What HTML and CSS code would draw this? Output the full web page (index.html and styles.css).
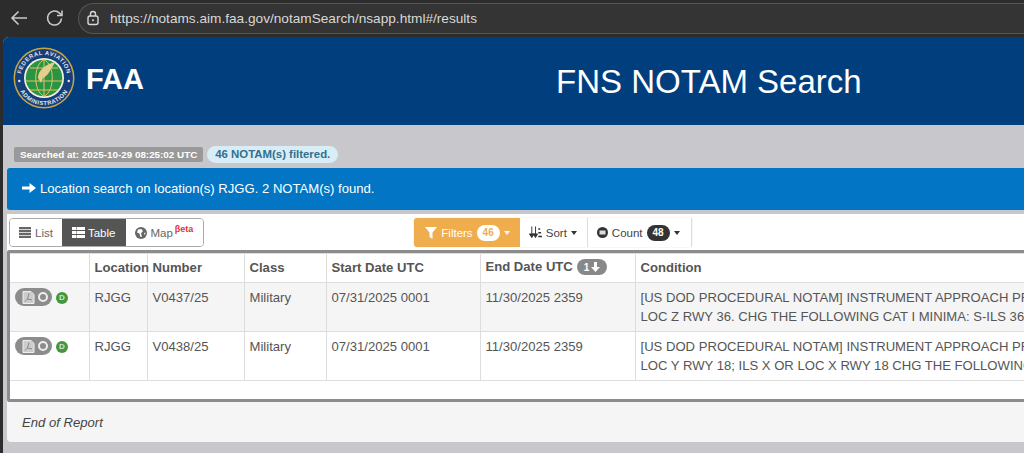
FILE: index.html
```html
<!DOCTYPE html>
<html lang="en">
<head>
<meta charset="utf-8">
<title>FNS NOTAM Search</title>
<link rel="stylesheet" href="styles.css">
</head>
<body>
<div class="browser-bar">
  <svg class="nav-icon" width="20" height="20" viewBox="0 0 20 20"><path d="M18 10H3M9.500 3.500 3 10l6.500 6.500" fill="none" stroke="#c9c9c9" stroke-width="1.6"/></svg>
  <svg class="nav-icon" width="20" height="20" viewBox="0 0 20 20"><path d="M16.500 10.500a7 7 0 1 1-2-5.400l2.200 2" fill="none" stroke="#c9c9c9" stroke-width="1.6"/><path d="M17 2.500v5h-5" fill="none" stroke="#c9c9c9" stroke-width="1.6"/></svg>
  <div class="address">
    <svg width="14" height="16" viewBox="0 0 14 16"><rect x="2" y="6" width="10" height="8.500" rx="2" fill="none" stroke="#d8d8d8" stroke-width="1.4"/><path d="M4.500 6V4a2.500 2.500 0 0 1 5 0v2" fill="none" stroke="#d8d8d8" stroke-width="1.4"/><circle cx="7" cy="10.200" r="1" fill="#d8d8d8"/></svg>
    <span class="url">https://notams.aim.faa.gov/notamSearch/nsapp.html#/results</span>
  </div>
</div>
<div class="window">
  <header class="site-header">
    <div class="brand">
      <svg class="seal" width="62" height="62" viewBox="0 0 62 62">
        <defs>
          <path id="arcTop" d="M7.800 31a23.200 23.200 0 0 1 46.400 0"/>
          <path id="arcBottom" d="M3.800 31a27.200 27.200 0 0 0 54.400 0"/>
        </defs>
        <circle cx="31" cy="31" r="30.500" fill="#c9a546"/>
        <circle cx="31" cy="31" r="29" fill="#153f7c"/>
        <circle cx="31" cy="31" r="20" fill="#f4f1e2"/>
        <circle cx="31" cy="31" r="18.300" fill="#2b9443"/>
        <path d="M12.700 34h36.600M31 12.700v36.600M17 21h28M17 43h28M31 12.700c-11 5-11 31.600 0 36.600M31 12.700c11 5 11 31.600 0 36.600" stroke="#e2c268" stroke-width="1" fill="none"/>
        <path d="M25 31c0-7 6-13 17-16-1 3-3 5-4 7-2 4-4 7-8 9l-2 5z" fill="#e6cf8c"/>
        <circle cx="6.300" cy="34" r="1.200" fill="#eee"/><circle cx="55.700" cy="34" r="1.200" fill="#eee"/>
        <text class="seal-text"><textPath href="#arcTop" startOffset="50%" text-anchor="middle">FEDERAL AVIATION</textPath></text>
        <text class="seal-text"><textPath href="#arcBottom" startOffset="50%" text-anchor="middle">ADMINISTRATION</textPath></text>
      </svg>
      <span class="faa">FAA</span>
    </div>
    <h1 class="title">FNS NOTAM Search</h1>
  </header>
  <main class="content">
    <div class="badges">
      <span class="stamp">Searched at: 2025-10-29 08:25:02 UTC</span>
      <span class="filtered">46 NOTAM(s) filtered.</span>
    </div>
    <div class="alert"><svg width="14" height="12" viewBox="0 0 14 12"><path d="M0 4.500h7.500V1L14 6l-6.500 5V7.500H0z" fill="#fff"/></svg><span>Location search on location(s) RJGG. 2 NOTAM(s) found.</span></div>
    <section class="panel">
      <div class="toolbar">
        <div class="btn-group views">
          <button class="btn list-btn"><svg width="12" height="11" viewBox="0 0 12 11"><path d="M0 0h12v2.200H0zM0 3h12v2.200H0zM0 6h12v2.200H0zM0 9h12v2H0z" fill="#666"/></svg>List</button>
          <button class="btn active"><svg width="13" height="11" viewBox="0 0 13 11"><path d="M0 0h4v3H0zM4.500 0H13v3H4.500zM0 4h4v3H0zM4.500 4H13v3H4.500zM0 8h4v3H0zM4.500 8H13v3H4.500z" fill="#fff"/></svg>Table</button>
          <button class="btn map-btn"><svg width="12" height="12" viewBox="0 0 12 12"><circle cx="6" cy="6" r="6" fill="#666"/><path d="M3 2.500 6.500 2 8 4 6 6.500 7 10 5 9.500 4.500 6.500 2 5.500zM9 6l1.500-.5L10 8.500z" fill="#fff"/></svg>Map<sup class="beta">βeta</sup></button>
        </div>
        <div class="btn-group actions">
          <button class="btn filter"><svg width="12" height="12" viewBox="0 0 12 12"><path d="M0 0h12L7.500 5.500V12l-3-2V5.500z" fill="#fff"/></svg>Filters<span class="pill light">46</span><i class="caret"></i></button>
          <button class="btn"><svg width="13" height="13" viewBox="0 0 14 13"><path d="M3 0v9M0.500 8 3 12 5.500 8zM7 0v9M4.800 8 7 12 9.200 8z" fill="#333" stroke="#333"/><path d="M10 2h2v1.500h-2zM10 6h3v1.500h-3zM10 10h4v1.500h-4z" fill="#333"/></svg>Sort<i class="caret dark"></i></button>
          <button class="btn count-btn"><svg width="11" height="11" viewBox="0 0 11 11"><circle cx="5.500" cy="5.500" r="5.500" fill="#333"/><path d="M2.500 3.500h6v4h-6z" fill="#ddd"/></svg>Count<span class="pill dark">48</span><i class="caret dark"></i></button>
        </div>
      </div>
      <div class="table-frame">
        <table class="results">
          <colgroup><col class="c-act"><col class="c-loc"><col class="c-num"><col class="c-cls"><col class="c-start"><col class="c-end"><col class="c-cond"></colgroup>
          <thead>
            <tr><th></th><th>Location</th><th>Number</th><th>Class</th><th>Start Date UTC</th><th>End Date UTC<span class="sort-pill">1<svg width="9" height="10" viewBox="0 0 9 10"><path d="M3 0h3v5h3L4.500 10 0 5h3z" fill="#fff"/></svg></span></th><th>Condition</th></tr>
          </thead>
          <tbody>
            <tr class="odd">
              <td><span class="row-actions"><span class="doc-pill"><svg width="13" height="13" viewBox="0 0 13 13"><path d="M1 .5h8l3 3v9H1z" fill="#ccc" stroke="#eee"/><path d="M7 2.500 5.500 8 3 10.500M5.500 8 10 9" fill="none" stroke="#8a8a8a"/></svg><i class="ring"></i></span><span class="d-badge">D</span></span></td>
              <td>RJGG</td><td>V0437/25</td><td>Military</td><td>07/31/2025 0001</td><td>11/30/2025 2359</td>
              <td>[US DOD PROCEDURAL NOTAM] INSTRUMENT APPROACH PROCEDURE<br>LOC Z RWY 36. CHG THE FOLLOWING CAT I MINIMA: S-ILS 36</td>
            </tr>
            <tr>
              <td><span class="row-actions"><span class="doc-pill"><svg width="13" height="13" viewBox="0 0 13 13"><path d="M1 .5h8l3 3v9H1z" fill="#ccc" stroke="#eee"/><path d="M7 2.500 5.500 8 3 10.500M5.500 8 10 9" fill="none" stroke="#8a8a8a"/></svg><i class="ring"></i></span><span class="d-badge">D</span></span></td>
              <td>RJGG</td><td>V0438/25</td><td>Military</td><td>07/31/2025 0001</td><td>11/30/2025 2359</td>
              <td>[US DOD PROCEDURAL NOTAM] INSTRUMENT APPROACH PROCEDURE<br>LOC Y RWY 18; ILS X OR LOC X RWY 18 CHG THE FOLLOWING</td>
            </tr>
          </tbody>
        </table>
      </div>
      <div class="report-end">End of Report</div>
    </section>
  </main>
</div>
</body>
</html>
```
FILE: styles.css
```css
* { box-sizing: border-box; }
html, body { margin: 0; height: 453px; overflow: hidden; }
body { background: #2c2c2c; font-family: "Liberation Sans", Arial, sans-serif; color: #555; }

.browser-bar { height: 37px; display: flex; align-items: center; padding: 0 0 1px 9px; gap: 16px; background: #2c2c2c; }
.address { flex: 1; height: 31px; margin-left: -3px; display: flex; align-items: center; gap: 10px; padding-left: 7px; background: #343434; border: 1px solid #565656; border-right: 0; border-radius: 16px 0 0 16px; }
.url { font-size: 13.650px; color: #d8d8d8; }

.window { margin-left: 3px; height: 416px; background: #c8c7cc; border-radius: 6px 0 0 0; overflow: hidden; }
.site-header { height: 88px; background: #003e7e; display: flex; align-items: center; }
.brand { display: flex; align-items: center; gap: 11px; padding-left: 10px; margin-top: -6px; }
.seal-text { font: bold 5.800px "Liberation Sans", Arial, sans-serif; fill: #e8e8e8; letter-spacing: .55px; }
.faa { margin-top: 2px; font-size: 29px; font-weight: 700; color: #fff; }
.title { margin: 2px 0 0 412px; font-size: 33px; font-weight: 400; color: #fff; white-space: nowrap; }

.content { padding: 20px 0 0 4px; }
.badges { display: flex; align-items: center; gap: 4px; height: 18px; padding-left: 7px; }
.stamp { background: #999; color: #fff; font-size: 9.850px; font-weight: 700; padding: 2px 6px; border-radius: 2px; line-height: 11px; }
.filtered { background: #d9edf7; color: #31708f; font-size: 11.400px; font-weight: 700; padding: 2px 8px; border-radius: 9px; line-height: 13px; }
.alert { margin-top: 5px; height: 42px; padding: 0 0 2px 15px; background: #0275c5; border-radius: 3px 0 0 3px; display: flex; align-items: center; gap: 4px; color: #fff; font-size: 13.100px; }

.panel { margin-top: 4px; background: #f5f5f5; border-radius: 0 0 0 4px; height: 228px; }
.toolbar { height: 36px; background: #fff; display: flex; align-items: center; padding: 1px 0 0 2px; }
.btn-group { display: flex; height: 29px; }
.actions { margin-left: 210px; border-radius: 3px; box-shadow: 0 0 1px #aaa; }
.views { border: 1px solid #aaa; border-radius: 4px; overflow: hidden; }
.btn { height: 100%; display: flex; align-items: center; gap: 4px; padding: 0 10px 0 9px; border: 0; background: #fff; color: #666; font: 11.500px "Liberation Sans", Arial, sans-serif; }
.list-btn { padding-right: 9px; }
.map-btn { padding-right: 10px; gap: 3px; }
.count-btn { padding-right: 11px; }
.active { background: #555; color: #fff; padding: 0 11px 0 10px; gap: 3px; }
.views .active { color: #fff; }
.beta { font-size: 9px; font-weight: 700; color: #e8303a; margin: -8px 0 0 -1px; }
.filter { background: #f0ad4e; color: #fff; border-radius: 3px 0 0 3px; padding: 0 10px 0 11px; }
.actions .btn { color: #444; border-right: 1px solid #ddd; }
.actions .filter { color: #fff; border-right: 0; }
.pill { display: inline-block; padding: 0 6px; height: 16px; line-height: 16px; border-radius: 8px; font-size: 10px; font-weight: 700; }
.pill.light { background: #fff; color: #f0ad4e; }
.pill.dark { background: #333; color: #fff; }
.caret { width: 0; height: 0; border: 3.500px solid transparent; border-top: 4px solid #fff; border-bottom: 0; }
.caret.dark { border-top-color: #333; }

.table-frame { height: 152px; background: #fff; border: 3px solid #8c8c8c; border-right: 0; border-radius: 3px 0 0 3px; overflow: hidden; }
.results { table-layout: fixed; width: 1200px; border-collapse: collapse; font-size: 13.100px; color: #555; }
.c-act { width: 79px; } .c-loc { width: 58px; } .c-num { width: 97px; } .c-cls { width: 82px; } .c-start { width: 154px; } .c-end { width: 155px; } .c-cond { width: 575px; }
.results th, .results td { border: 1px solid #ddd; padding: 0 5px; text-align: left; vertical-align: top; white-space: nowrap; }
.results th { height: 29px; padding-bottom: 2px; vertical-align: middle; font-weight: 700; }
.results th:first-child, .results td:first-child { border-left: 0; }
.results td { height: 49px; padding-top: 5px; line-height: 19px; }
.odd td { background: #f5f5f5; }
.results td:last-child, .results th:last-child { border-right: 0; }
.sort-pill { display: inline-flex; align-items: center; gap: 2px; height: 16px; margin-left: 4px; padding: 0 7px; border-radius: 8px; background: #888; color: #fff; font-size: 10px; vertical-align: middle; }
.row-actions { display: flex; align-items: center; gap: 4px; }
.doc-pill { display: flex; align-items: center; gap: 3px; width: 37px; height: 18px; padding-left: 7px; border-radius: 9px; background: #8c8c8c; }
.ring { width: 10px; height: 10px; border: 2px solid #eee; border-radius: 50%; }
.d-badge { width: 12px; height: 12px; margin-top: 2px; border-radius: 50%; background: #3f9a3f; color: #ddd; font-size: 8px; font-weight: 700; line-height: 12px; text-align: center; }

.report-end { height: 39px; margin-top: 1px; padding-left: 15px; display: flex; align-items: center; font-size: 13.100px; font-style: italic; color: #444; }
```
